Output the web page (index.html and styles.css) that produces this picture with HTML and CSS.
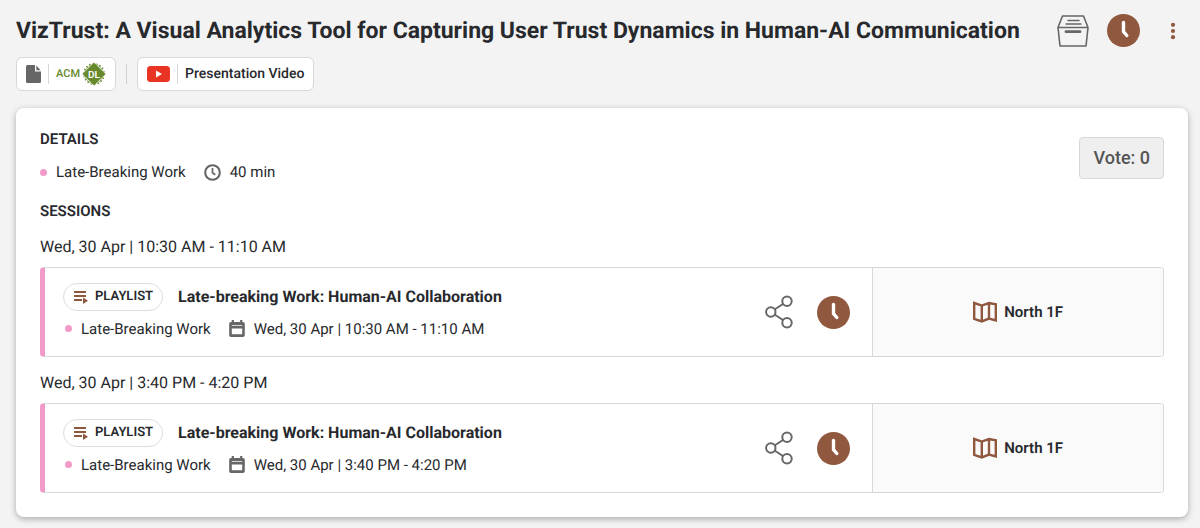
FILE: index.html
```
<!DOCTYPE html>
<html lang="en">
<head>
  <meta charset="UTF-8">
  <meta name="viewport" content="width=device-width, initial-scale=1">
  <title>VizTrust</title>
  <link rel="stylesheet" href="styles.css">
</head>
<body>
  <!-- Shared icons -->
  <svg class="sprite" aria-hidden="true">
    <symbol id="clock-full" viewBox="0 0 33 33">
      <circle cx="16.5" cy="16.5" r="16.5" fill="#90583f"/>
      <path d="M16.5 8.5v9.2l3.3 3.8" fill="none" stroke="#fff" stroke-width="3.4" stroke-linecap="round" stroke-linejoin="round"/>
    </symbol>
    <symbol id="playlist" viewBox="0 0 16 14">
      <path d="M1 2h12M1 6h12M1 10h8" fill="none" stroke="#90583f" stroke-width="2"/>
      <path d="M10 7.6l5 3.2-5 3.2z" fill="#90583f"/>
    </symbol>
    <symbol id="calendar" viewBox="0 0 16 18">
      <path d="M2 2h12a1.8 1.8 0 0 1 1.8 1.8v11.4a1.8 1.8 0 0 1-1.8 1.8H2a1.8 1.8 0 0 1-1.8-1.8V3.8A1.8 1.8 0 0 1 2 2zM2.8 8.5v5.8h10.4V8.5zM2.8 5.2v.9h10.4v-.9z" fill="#666" fill-rule="evenodd"/>
      <path d="M3.8 0v4M12.2 0v4" stroke="#666" stroke-width="2.2"/>
    </symbol>
    <symbol id="share" viewBox="0 0 28 34">
      <path d="M9.5 14.5l8.5-5.5M9.5 19.5l8.5 5.5" stroke="#666" stroke-width="2"/>
      <g fill="none" stroke="#666" stroke-width="2">
        <circle cx="5.8" cy="17" r="4.7"/>
        <circle cx="22" cy="6.2" r="4.7"/>
        <circle cx="22" cy="27.8" r="4.7"/>
      </g>
    </symbol>
    <symbol id="map" viewBox="0 0 24 22">
      <path d="M1.2 2l7.6 2.6L16 2l6.8 1.2v16.2L16 17.6l-7.2 2.8-7.6-2.6zM8.8 4.6v15.8M16 2v15.6" fill="none" stroke="#90583f" stroke-width="2.4"/>
    </symbol>
  </svg>

  <header class="header">
    <div class="title-row">
      <h1>VizTrust: A Visual Analytics Tool for Capturing User Trust Dynamics in Human-AI Communication</h1>
      <div class="title-actions">
        <button class="icon-btn" type="button" aria-label="Collections">
          <svg width="32" height="32" viewBox="0 0 32 32" fill="none" stroke="#666" stroke-width="1.6" stroke-linejoin="round">
            <path d="M5.5 1h21L31 12.5H1zM1 12.5L3 31h26l2-18.5"/>
            <path d="M11 5.5h11M9 9h15" stroke-width="1.5" stroke-linecap="round"/>
            <path d="M9 16.7h14" stroke-width="2.8" stroke-linecap="round"/>
          </svg>
        </button>
        <button class="icon-btn" type="button" aria-label="Schedule">
          <svg width="33" height="33"><use href="#clock-full"/></svg>
        </button>
        <button class="icon-btn more" type="button" aria-label="More">
          <svg width="6" height="18" viewBox="0 0 6 18" fill="#90583f">
            <circle cx="3" cy="2.8" r="2.1"/><circle cx="3" cy="9" r="2.1"/><circle cx="3" cy="15.2" r="2.1"/>
          </svg>
        </button>
      </div>
    </div>

    <div class="links">
      <a class="link" href="#" aria-label="ACM DL">
        <svg width="15" height="18" viewBox="0 0 15 18" fill="#666">
          <path d="M1.5 0H9v6.5h6v10A1.5 1.5 0 0 1 13.5 18h-12A1.5 1.5 0 0 1 0 16.5v-15A1.5 1.5 0 0 1 1.5 0zM10.3.6L14.6 5.3h-4.3z"/>
        </svg>
        <span class="link-body acm">ACM<svg width="24" height="24" viewBox="0 0 24 24">
            <circle cx="12" cy="12" r="10" fill="none" stroke="#65892b" stroke-width="1.6" stroke-dasharray="1.6 1.89"/>
            <circle cx="12" cy="12" r="9.2" fill="none" stroke="#65892b" stroke-width=".6"/>
            <path d="M12 .2L23.800 12 12 23.800.2 12z" fill="#65892b" stroke="#fff" stroke-width=".6"/>
            <text class="dl" x="12" y="15.500" text-anchor="middle">DL</text>
          </svg></span>
      </a>
      <span class="divider"></span>
      <a class="link" href="#">
        <svg width="23" height="16" viewBox="0 0 23 16">
          <rect width="23" height="16" rx="3.5" fill="#e93323"/>
          <path d="M9 4.5l6 3.5-6 3.5z" fill="#fff"/>
        </svg>
        <span class="link-body">Presentation Video</span>
      </a>
    </div>
  </header>

  <main class="card">
    <div class="details">
      <section>
        <h2>DETAILS</h2>
        <div class="meta">
          <span class="dot"></span>
          <span>Late-Breaking Work</span>
          <svg class="meta-icon" width="17" height="17" viewBox="0 0 17 17" fill="none" stroke="#666">
            <circle cx="8.5" cy="8.5" r="7.3" stroke-width="2.1"/>
            <path d="M8.5 4v4.8l2.8 2" stroke-width="1.7"/>
          </svg>
          <span>40 min</span>
        </div>
      </section>
      <button class="vote" type="button">Vote: 0</button>
    </div>

    <h2>SESSIONS</h2>

    <h3 class="date">Wed, 30 Apr | 10:30 AM - 11:10 AM</h3>
    <article class="session">
      <div class="session-main">
        <div class="session-info">
          <div class="session-title">
            <span class="tag"><svg width="16" height="14"><use href="#playlist"/></svg>PLAYLIST</span>
            <h4>Late-breaking Work: Human-AI Collaboration</h4>
          </div>
          <div class="meta">
            <span class="dot"></span>
            <span>Late-Breaking Work</span>
            <svg class="meta-icon" width="16" height="18"><use href="#calendar"/></svg>
            <span>Wed, 30 Apr | 10:30 AM - 11:10 AM</span>
          </div>
        </div>
        <button class="icon-btn" type="button" aria-label="Share"><svg width="28" height="34"><use href="#share"/></svg></button>
        <button class="icon-btn" type="button" aria-label="Schedule"><svg width="33" height="33"><use href="#clock-full"/></svg></button>
      </div>
      <a class="venue" href="#"><svg width="24" height="22"><use href="#map"/></svg>North 1F</a>
    </article>

    <h3 class="date">Wed, 30 Apr | 3:40 PM - 4:20 PM</h3>
    <article class="session">
      <div class="session-main">
        <div class="session-info">
          <div class="session-title">
            <span class="tag"><svg width="16" height="14"><use href="#playlist"/></svg>PLAYLIST</span>
            <h4>Late-breaking Work: Human-AI Collaboration</h4>
          </div>
          <div class="meta">
            <span class="dot"></span>
            <span>Late-Breaking Work</span>
            <svg class="meta-icon" width="16" height="18"><use href="#calendar"/></svg>
            <span>Wed, 30 Apr | 3:40 PM - 4:20 PM</span>
          </div>
        </div>
        <button class="icon-btn" type="button" aria-label="Share"><svg width="28" height="34"><use href="#share"/></svg></button>
        <button class="icon-btn" type="button" aria-label="Schedule"><svg width="33" height="33"><use href="#clock-full"/></svg></button>
      </div>
      <a class="venue" href="#"><svg width="24" height="22"><use href="#map"/></svg>North 1F</a>
    </article>
  </main>
</body>
</html>
```
FILE: styles.css
```
/* Reset + base */
* { margin:0; padding:0; box-sizing:border-box; }
body {
  padding:12px 12px 12px 16px;
  background:#f3f3f3;
  color:#27292d;
  font-family:Roboto, sans-serif;
  font-size:16px;
  line-height:20px;
  text-rendering:geometricPrecision;
}
a { color:inherit; text-decoration:none; }
button { font:inherit; color:inherit; cursor:pointer; }
svg { display:block; flex:none; }
.sprite { position:absolute; width:0; height:0; }

/* Header */
.title-row { display:flex; align-items:center; justify-content:space-between; height:37px; }
h1 { font-size:23px; line-height:36px; font-weight:700; white-space:nowrap; }
.title-actions { display:flex; align-items:center; gap:18px; }
.icon-btn { display:flex; border:0; background:none; }
.more { padding:0 12px; }

.links { display:flex; align-items:center; gap:10px; margin:8px 0 17px; }
.link {
  display:flex; align-items:center; gap:7px;
  height:34px; padding:0 9px;
  background:#fff;
  border:1px solid #d8d8da; border-radius:6px;
  font-size:14px; font-weight:500;
}
.link-body {
  display:flex; align-items:center;
  height:20px; padding-left:7px;
  border-left:1px solid #d8d8da;
}
.acm { gap:2px; color:#65892b; font-size:11px; }
.dl { fill:#fff; font-size:10px; font-weight:600; }
.divider { width:1px; height:20px; background:#d0d0d2; }

/* Card */
.card {
  padding:21px 24px 24px;
  background:#fff;
  border-radius:8px;
  box-shadow:0 2px 6px rgba(0,0,0,0.3);
}
h2 { font-size:15px; line-height:20px; font-weight:600; }
.details { display:flex; justify-content:space-between; align-items:flex-start; }
.details .meta { margin:12px 0 18px; }
.vote {
  height:42px; margin-top:8px; padding:0 13px;
  background:#efefef;
  border:1px solid #d8d8da; border-radius:4px;
  color:#555; font-size:18px; font-weight:500;
}

.meta { display:flex; align-items:center; font-size:15px; line-height:22px; }
.dot { width:7px; height:7px; margin-right:9px; border-radius:50%; background:#f39bc8; }
.meta-icon { margin:0 9px 0 18px; }

/* Sessions */
.date { margin:16px 0 10px; font-size:16px; line-height:20px; font-weight:400; }
.session {
  display:flex;
  min-height:90px;
  background:#fff;
  border:1px solid #d8d8da; border-left:5px solid #f39bc8; border-radius:4px;
  overflow:hidden;
}
.session-main { flex:1; display:flex; align-items:center; gap:24px; padding:0 22px 0 18px; }
.session-info { flex:1; padding-bottom:2px; }
.session-title { display:flex; align-items:center; gap:15px; margin-bottom:7px; }
.session .dot { margin-left:2px; }
h4 { font-size:16px; font-weight:700; }
.tag {
  display:flex; align-items:center; gap:6px;
  height:28px; padding:0 9px;
  border:1px solid #dcdce4; border-radius:14px;
  font-size:13px; font-weight:600;
}
.venue {
  flex:0 0 26%;
  display:flex; align-items:center; justify-content:center; gap:7px;
  background:#fafafa;
  border-left:1px solid #d8d8da;
  font-size:15px; font-weight:600;
}
```
